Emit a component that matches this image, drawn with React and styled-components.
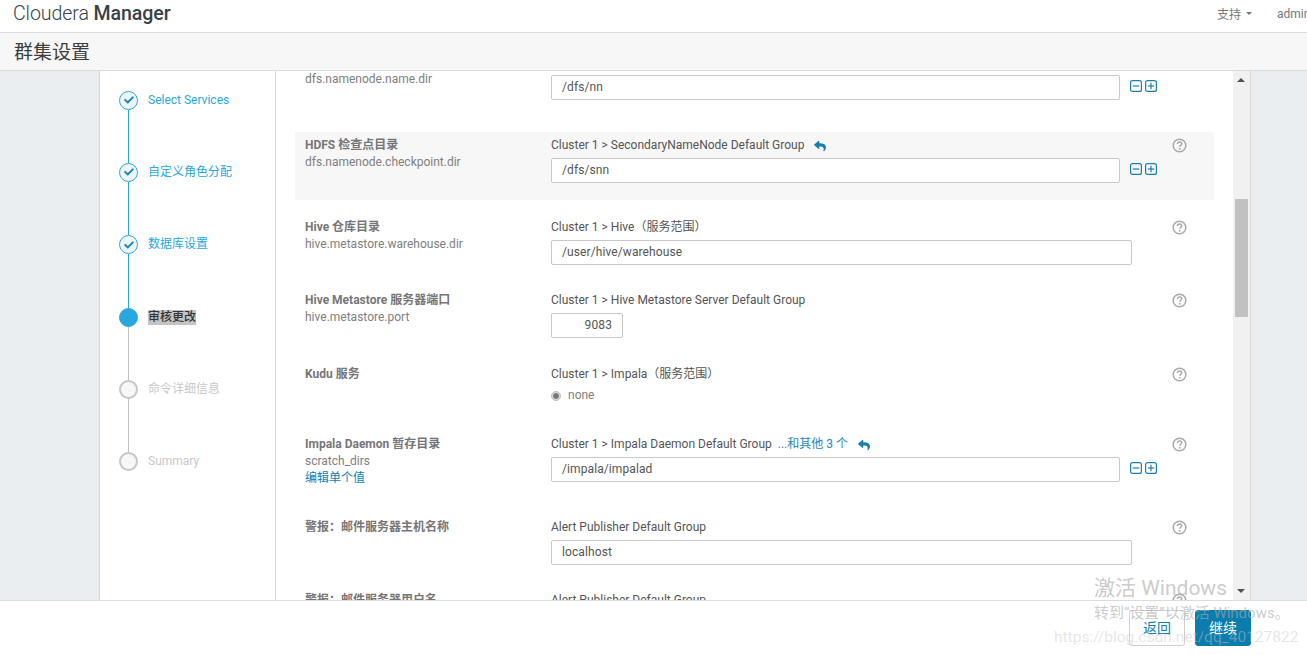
import React from "react";
import styled, { createGlobalStyle } from "styled-components";
import { FaCheck, FaReply } from "react-icons/fa";

const Global = createGlobalStyle`
  html, body { margin: 0; padding: 0; height: 100%; overflow: hidden; background: #fff; }
  body { font-family: Roboto, "Noto Sans CJK SC", sans-serif; font-size: 12px; color: #555; }
  * { box-sizing: border-box; }
`;

const Page = styled.div`
  position: relative;
  width: 1307px;
  height: 655px;
  display: flex;
  flex-direction: column;
  overflow: hidden;
`;
const TopBar = styled.header`
  height: 33px;
  flex: none;
  display: flex;
  align-items: center;
  padding: 0 0 5px 13px;
  border-bottom: 1px solid #dcdcdc;
  background: #fff;
  overflow: hidden;
`;
const Logo = styled.div`
  font-size: 19.6px;
  font-weight: 300;
  color: #38424a;
  letter-spacing: -0.1px;
  b { font-weight: 500; }
`;
const TopNav = styled.nav`
  margin-left: auto;
  display: flex;
  align-items: center;
  width: 90px;
  flex: none;
  font-size: 12px;
  color: #777;
  white-space: nowrap;
`;
const Caret = styled.i`
  display: inline-block;
  width: 0;
  height: 0;
  margin-left: 5px;
  border-left: 3px solid transparent;
  border-right: 3px solid transparent;
  border-top: 3px solid #777;
`;
const Admin = styled.span`
  margin-left: 25px;
`;
const TitleBar = styled.div`
  height: 38px;
  flex: none;
  display: flex;
  align-items: center;
  padding: 0 0 3px 14px;
  background: #f7f7f7;
  border-bottom: 1px solid #dcdcdc;
  font-size: 19px;
  color: #3d3d3d;
`;
const Body = styled.div`
  height: 529px;
  flex: none;
  display: flex;
  background: #ebeef1;
  overflow: hidden;
`;
const Panel = styled.div`
  margin-left: 99px;
  width: 1152px;
  display: flex;
  background: #fff;
  border-left: 1px solid #d8d8d8;
  border-right: 1px solid #d8d8d8;
`;
const Sidebar = styled.ol`
  width: 176px;
  flex: none;
  margin: 0;
  padding: 19.5px 0 0 19px;
  list-style: none;
  border-right: 1px solid #d8d8d8;
`;
const Step = styled.li`
  height: 72.4px;
  display: flex;
  gap: 10px;
`;
const Marker = styled.div`
  width: 19px;
  display: flex;
  flex-direction: column;
  align-items: center;
`;
const Dot = styled.div`
  width: 19px;
  height: 19px;
  flex: none;
  border-radius: 50%;
  display: flex;
  align-items: center;
  justify-content: center;
  background: ${(p) => (p.$state === "active" ? "#29a8e0" : p.$state === "done" ? "#eef6fb" : "#f7f7f7")};
  border: ${(p) => (p.$state === "todo" ? "2px solid #c6c6c6" : "1px solid #29a8e0")};
  color: #1f86b8;
  font-size: 10px;
`;
const Line = styled.div`
  width: 1px;
  flex: 1;
  background: ${(p) => (p.$done ? "#29a8e0" : "#c0c0c0")};
`;
const StepLabel = styled.span`
  align-self: flex-start;
  margin-top: 2px;
  line-height: 15px;
  height: 15px;
  font-size: 12px;
  color: ${(p) => (p.$state === "active" ? "#333" : p.$state === "done" ? "#29a8e0" : "#c8c8c8")};
  background: ${(p) => (p.$state === "active" ? "#c4c4c4" : "transparent")};
  font-weight: ${(p) => (p.$state === "active" ? 500 : 400)};
`;
const Content = styled.div`
  width: 957px;
  flex: none;
  overflow: hidden;
  padding: 0 0 0 19px;
`;
const Rows = styled.div`
  margin-top: -22px;
  width: 919px;
`;
const Row = styled.section`
  height: ${(p) => p.$h}px;
  margin-bottom: ${(p) => p.$mb || 0}px;
  padding: 5px 0 0 10px;
  display: grid;
  grid-template-columns: 246px 621px 15px;
  align-content: start;
  background: ${(p) => (p.$hl ? "#f7f7f7" : "transparent")};
`;
const NameCol = styled.div`
  display: flex;
  flex-direction: column;
`;
const Title = styled.div`
  font-weight: 700;
  color: #767676;
  line-height: 17px;
  white-space: nowrap;
`;
const Sub = styled.div`
  color: #808080;
  line-height: 17px;
`;
const EditLink = styled.a`
  color: #0f7fb0;
  line-height: 17px;
`;
const ValueCol = styled.div`
  display: flex;
  flex-direction: column;
  gap: 4px;
`;
const Scope = styled.div`
  color: #555;
  line-height: 17px;
  display: flex;
  align-items: center;
  white-space: pre;
`;
const More = styled.span`
  color: #1f86b8;
  margin-left: 6px;
`;
const Undo = styled(FaReply)`
  color: #1b7fae;
  width: 14px;
  height: 12px;
  margin-left: 9px;
`;
const Control = styled.div`
  display: flex;
  align-items: center;
  gap: 10px;
`;
const Input = styled.div`
  width: ${(p) => p.$w}px;
  height: 25px;
  padding: 0 10px;
  background: #fff;
  border: 1px solid #c8c8c8;
  border-radius: 2px;
  line-height: 23px;
  color: #555;
  text-align: ${(p) => (p.$num ? "right" : "left")};
  letter-spacing: 0.1px;
`;
const Steppers = styled.div`
  display: flex;
  gap: 3px;
  margin-top: -4px;
`;
const RadioLine = styled.div`
  display: flex;
  align-items: center;
  gap: 8px;
  color: #808080;
  line-height: 17px;
`;
const Radio = styled.i`
  width: 8px;
  height: 8px;
  border-radius: 50%;
  background: #777;
  border: 1px solid #ddd;
  outline: 1px solid #bbb;
  margin-left: 1px;
`;
const HelpSlot = styled.div`
  padding-top: 1px;
`;
const ScrollTrack = styled.div`
  width: 17px;
  flex: none;
  padding: 0 2px;
  background: #f1f1f1;
  position: relative;
`;
const Thumb = styled.div`
  width: 13px;
  height: 118px;
  margin-top: 128px;
  background: #c1c1c1;
`;
const Arrow = styled.i`
  position: absolute;
  left: 4px;
  ${(p) => (p.$up ? "top: 7px;" : "bottom: 7px;")}
  width: 0;
  height: 0;
  border-left: 4px solid transparent;
  border-right: 4px solid transparent;
  ${(p) => (p.$up ? "border-bottom: 4px solid #505050;" : "border-top: 4px solid #505050;")}
`;
const Footer = styled.footer`
  height: 55px;
  flex: none;
  background: #fff;
  border-top: 1px solid #dcdcdc;
  display: flex;
  justify-content: flex-end;
  gap: 10px;
  padding: 9px 56px 0 0;
`;
const Button = styled.button`
  width: 56px;
  height: 36px;
  padding: 0 0 3px;
  font: 400 14px Roboto, "Noto Sans CJK SC", sans-serif;
  border-radius: 3px;
  border: 1px solid ${(p) => (p.$primary ? "#0a7cad" : "#cfcfcf")};
  background: ${(p) => (p.$primary ? "#0a7cad" : "#fff")};
  color: ${(p) => (p.$primary ? "#fff" : "#0f7fb0")};
`;
const Watermark = styled.div`
  position: absolute;
  left: 0;
  top: 0;
  pointer-events: none;
  white-space: nowrap;
`;
const WinTitle = styled(Watermark)`
  left: 1094px;
  top: 574px;
  font-size: 21px;
  line-height: 28px;
  color: rgba(170, 170, 170, 0.62);
`;
const WinSub = styled(Watermark)`
  left: 1094px;
  top: 604px;
  font-size: 15px;
  line-height: 18px;
  color: rgba(170, 170, 170, 0.62);
`;
const Blog = styled(Watermark)`
  left: 1054px;
  top: 627px;
  font-size: 15.5px;
  line-height: 20px;
  color: rgba(200, 200, 200, 0.45);
`;

const HelpIcon = () => (
  <svg width="15" height="15" viewBox="0 0 15 15" fill="none">
    <circle cx="7.5" cy="7.5" r="6.3" stroke="#a9a9a9" strokeWidth="1.5" />
    <path d="M5.4 6c.1-1.3 1-2 2.2-2 1.2 0 2.1.7 2.1 1.8 0 1.5-2 1.5-2 3" stroke="#a9a9a9" strokeWidth="1.5" />
    <rect x="6.9" y="10" width="1.6" height="1.6" fill="#a9a9a9" />
  </svg>
);
const BoxIcon = ({ plus }) => (
  <svg width="12" height="12" viewBox="0 0 12 12" fill="none">
    <rect x="0.6" y="0.6" width="10.8" height="10.8" rx="2" stroke="#1b7fae" strokeWidth="1.2" />
    <path d="M2.8 6h6.4" stroke="#1b7fae" strokeWidth="1.2" />
    {plus && <path d="M6 2.8v6.4" stroke="#1b7fae" strokeWidth="1.2" />}
  </svg>
);

const steps = [
  { label: "Select Services", state: "done" },
  { label: "自定义角色分配", state: "done" },
  { label: "数据库设置", state: "done" },
  { label: "审核更改", state: "active" },
  { label: "命令详细信息", state: "todo" },
  { label: "Summary", state: "todo" },
];

const rows = [
  { h: 83, title: "HDFS NameNode 数据目录", sub: "dfs.namenode.name.dir", scope: "Cluster 1 > HDFS（服务范围）", value: "/dfs/nn", w: 569, multi: true },
  { h: 68, mb: 14, hl: true, title: "HDFS 检查点目录", sub: "dfs.namenode.checkpoint.dir", scope: "Cluster 1 > SecondaryNameNode Default Group", undo: true, value: "/dfs/snn", w: 569, multi: true },
  { h: 73, title: "Hive 仓库目录", sub: "hive.metastore.warehouse.dir", scope: "Cluster 1 > Hive（服务范围）", value: "/user/hive/warehouse", w: 581 },
  { h: 74, title: "Hive Metastore 服务器端口", sub: "hive.metastore.port", scope: "Cluster 1 > Hive Metastore Server Default Group", value: "9083", w: 72, num: true },
  { h: 70, title: "Kudu 服务", scope: "Cluster 1 > Impala（服务范围）", radio: "none" },
  { h: 83, title: "Impala Daemon 暂存目录", sub: "scratch_dirs", edit: "编辑单个值", scope: "Cluster 1 > Impala Daemon Default Group", more: "...和其他 3 个", undo: true, value: "/impala/impalad", w: 569, multi: true },
  { h: 73, title: "警报：邮件服务器主机名称", scope: "Alert Publisher Default Group", value: "localhost", w: 581 },
  { h: 72, title: "警报：邮件服务器用户名", scope: "Alert Publisher Default Group", value: "", w: 581 },
];

export default function App() {
  return (
    <Page>
      <Global />
      <TopBar>
        <Logo>Cloudera <b>Manager</b></Logo>
        <TopNav>
          支持<Caret /><Admin>admin</Admin>
        </TopNav>
      </TopBar>
      <TitleBar>群集设置</TitleBar>
      <Body>
        <Panel>
          <Sidebar>
            {steps.map((s, i) => (
              <Step key={s.label}>
                <Marker>
                  <Dot $state={s.state}>{s.state === "done" && <FaCheck />}</Dot>
                  {i < steps.length - 1 && <Line $done={s.state === "done"} />}
                </Marker>
                <StepLabel $state={s.state}>{s.label}</StepLabel>
              </Step>
            ))}
          </Sidebar>
          <Content>
            <Rows>
              {rows.map((r) => (
                <Row key={r.title} $h={r.h} $mb={r.mb} $hl={r.hl}>
                  <NameCol>
                    <Title>{r.title}</Title>
                    {r.sub && <Sub>{r.sub}</Sub>}
                    {r.edit && <EditLink>{r.edit}</EditLink>}
                  </NameCol>
                  <ValueCol>
                    <Scope>
                      {r.scope}
                      {r.more && <More>{r.more}</More>}
                      {r.undo && <Undo />}
                    </Scope>
                    {r.value !== undefined && (
                      <Control>
                        <Input $w={r.w} $num={r.num}>{r.value}</Input>
                        {r.multi && (
                          <Steppers>
                            <BoxIcon />
                            <BoxIcon plus />
                          </Steppers>
                        )}
                      </Control>
                    )}
                    {r.radio && (
                      <RadioLine>
                        <Radio />
                        {r.radio}
                      </RadioLine>
                    )}
                  </ValueCol>
                  <HelpSlot><HelpIcon /></HelpSlot>
                </Row>
              ))}
            </Rows>
          </Content>
          <ScrollTrack>
            <Arrow $up />
            <Thumb />
            <Arrow />
          </ScrollTrack>
        </Panel>
      </Body>
      <Footer>
        <Button>返回</Button>
        <Button $primary>继续</Button>
      </Footer>
      <WinTitle>激活 Windows</WinTitle>
      <WinSub>转到“设置”以激活 Windows。</WinSub>
      <Blog>https://blog.csdn.net/qq_40127822</Blog>
    </Page>
  );
}
